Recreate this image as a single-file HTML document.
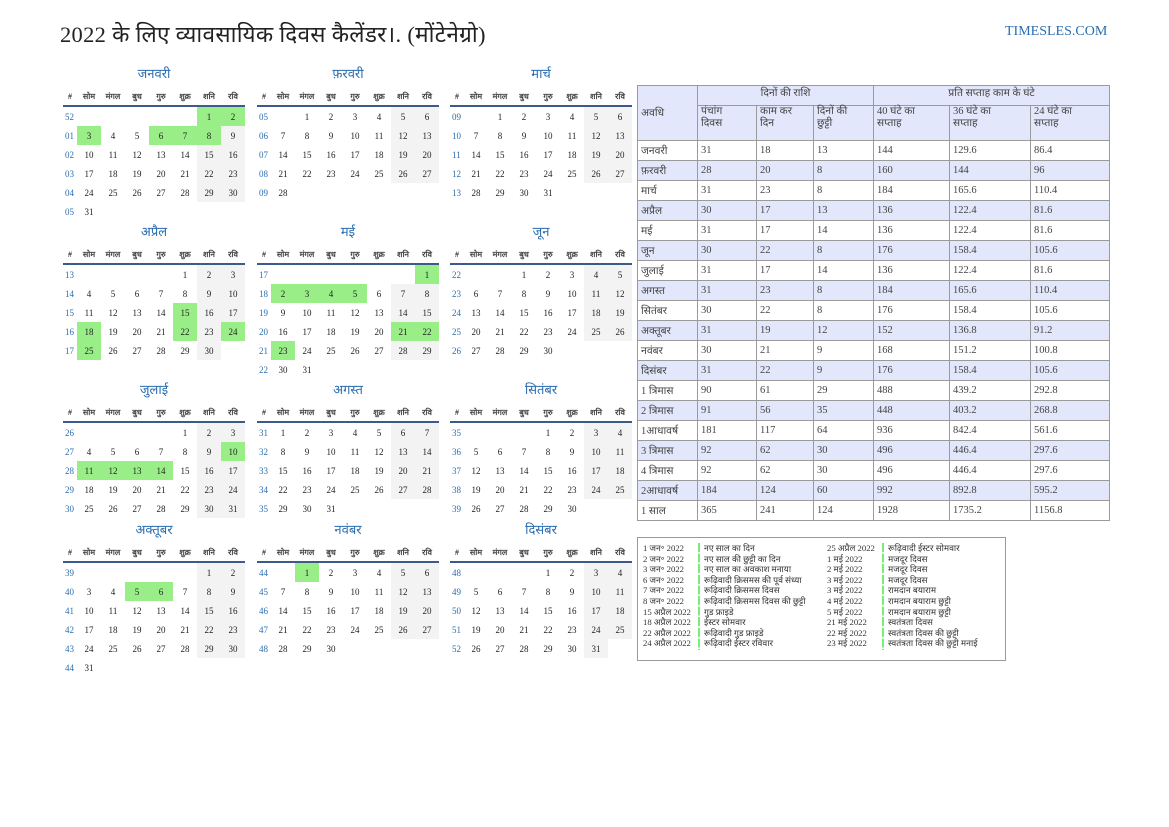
<!DOCTYPE html>
<html><head><meta charset="utf-8">
<style>
body{margin:0;width:1169px;height:827px;background:#fff;position:relative;font-family:"Liberation Serif",serif;color:#222;overflow:hidden}
.t{position:absolute;left:60px;top:18px;font-size:22.5px;color:#222;letter-spacing:0.3px}
.logo{position:absolute;left:1005px;top:24px;font-size:14px;color:#2a6db0}
.m{position:absolute;width:182px}
.m h3{margin:0;height:22px;line-height:18px;text-align:center;font-weight:normal;font-size:13px;color:#2a6db0}
.m table{border-collapse:collapse;width:182px;table-layout:fixed;font-size:9px}
.m td{height:19px;padding:0;text-align:center;}
.m td:first-child{width:14px;color:#2a6db0;text-align:left;padding-left:2px}
.m tr.h td{height:18px;font-size:8px;font-weight:bold;color:#444;border-bottom:2px solid #3c5a8a}
.m tr.h td:first-child{color:#333;text-align:center;padding:0}
.w{background:#f3f3f3}
.g{background:#99ee88}
.s{position:absolute;left:637px;top:85px;border-collapse:collapse;font-size:10.5px;color:#444;table-layout:fixed}
.s td{border:1px solid #9a9a9a;padding:0 3px;height:19px;text-align:left}
.s tr.b td{background:#e2e7fb}
.s .hd td{background:#e2e7fb;vertical-align:top}
.hol{position:absolute;left:637px;top:537px;width:369px;height:124px;border:1px solid #9a9a9a;box-sizing:border-box;font-size:8.7px;color:#333;line-height:10.6px;padding:4px 0 0 5px}
.c{position:absolute;top:5px;white-space:nowrap}
.bar{position:absolute;top:5px;width:2px;height:107px;background:repeating-linear-gradient(#7e7 0 9px,#fff 9px 10.6px)}
</style></head><body>
<div class="t">2022 के लिए व्यावसायिक दिवस कैलेंडर।. (मोंटेनेग्रो)</div>
<div class="logo">TIMESLES.COM</div>

<div class="m" style="left:63px;top:65px"><h3>जनवरी</h3><table>
<tr class="h"><td>#</td><td>सोम</td><td>मंगल</td><td>बुध</td><td>गुरु</td><td>शुक्र</td><td>शनि</td><td>रवि</td></tr>
<tr><td>52</td><td></td><td></td><td></td><td></td><td></td><td class="g">1</td><td class="g">2</td></tr>
<tr><td>01</td><td class="g">3</td><td>4</td><td>5</td><td class="g">6</td><td class="g">7</td><td class="g">8</td><td class="w">9</td></tr>
<tr><td>02</td><td>10</td><td>11</td><td>12</td><td>13</td><td>14</td><td class="w">15</td><td class="w">16</td></tr>
<tr><td>03</td><td>17</td><td>18</td><td>19</td><td>20</td><td>21</td><td class="w">22</td><td class="w">23</td></tr>
<tr><td>04</td><td>24</td><td>25</td><td>26</td><td>27</td><td>28</td><td class="w">29</td><td class="w">30</td></tr>
<tr><td>05</td><td>31</td><td></td><td></td><td></td><td></td><td></td><td></td></tr></table></div>

<div class="m" style="left:257px;top:65px"><h3>फ़रवरी</h3><table>
<tr class="h"><td>#</td><td>सोम</td><td>मंगल</td><td>बुध</td><td>गुरु</td><td>शुक्र</td><td>शनि</td><td>रवि</td></tr>
<tr><td>05</td><td></td><td>1</td><td>2</td><td>3</td><td>4</td><td class="w">5</td><td class="w">6</td></tr>
<tr><td>06</td><td>7</td><td>8</td><td>9</td><td>10</td><td>11</td><td class="w">12</td><td class="w">13</td></tr>
<tr><td>07</td><td>14</td><td>15</td><td>16</td><td>17</td><td>18</td><td class="w">19</td><td class="w">20</td></tr>
<tr><td>08</td><td>21</td><td>22</td><td>23</td><td>24</td><td>25</td><td class="w">26</td><td class="w">27</td></tr>
<tr><td>09</td><td>28</td><td></td><td></td><td></td><td></td><td></td><td></td></tr></table></div>

<div class="m" style="left:450px;top:65px"><h3>मार्च</h3><table>
<tr class="h"><td>#</td><td>सोम</td><td>मंगल</td><td>बुध</td><td>गुरु</td><td>शुक्र</td><td>शनि</td><td>रवि</td></tr>
<tr><td>09</td><td></td><td>1</td><td>2</td><td>3</td><td>4</td><td class="w">5</td><td class="w">6</td></tr>
<tr><td>10</td><td>7</td><td>8</td><td>9</td><td>10</td><td>11</td><td class="w">12</td><td class="w">13</td></tr>
<tr><td>11</td><td>14</td><td>15</td><td>16</td><td>17</td><td>18</td><td class="w">19</td><td class="w">20</td></tr>
<tr><td>12</td><td>21</td><td>22</td><td>23</td><td>24</td><td>25</td><td class="w">26</td><td class="w">27</td></tr>
<tr><td>13</td><td>28</td><td>29</td><td>30</td><td>31</td><td></td><td></td><td></td></tr></table></div>

<div class="m" style="left:63px;top:223px"><h3>अप्रैल</h3><table>
<tr class="h"><td>#</td><td>सोम</td><td>मंगल</td><td>बुध</td><td>गुरु</td><td>शुक्र</td><td>शनि</td><td>रवि</td></tr>
<tr><td>13</td><td></td><td></td><td></td><td></td><td>1</td><td class="w">2</td><td class="w">3</td></tr>
<tr><td>14</td><td>4</td><td>5</td><td>6</td><td>7</td><td>8</td><td class="w">9</td><td class="w">10</td></tr>
<tr><td>15</td><td>11</td><td>12</td><td>13</td><td>14</td><td class="g">15</td><td class="w">16</td><td class="w">17</td></tr>
<tr><td>16</td><td class="g">18</td><td>19</td><td>20</td><td>21</td><td class="g">22</td><td class="w">23</td><td class="g">24</td></tr>
<tr><td>17</td><td class="g">25</td><td>26</td><td>27</td><td>28</td><td>29</td><td class="w">30</td><td></td></tr></table></div>

<div class="m" style="left:257px;top:223px"><h3>मई</h3><table>
<tr class="h"><td>#</td><td>सोम</td><td>मंगल</td><td>बुध</td><td>गुरु</td><td>शुक्र</td><td>शनि</td><td>रवि</td></tr>
<tr><td>17</td><td></td><td></td><td></td><td></td><td></td><td></td><td class="g">1</td></tr>
<tr><td>18</td><td class="g">2</td><td class="g">3</td><td class="g">4</td><td class="g">5</td><td>6</td><td class="w">7</td><td class="w">8</td></tr>
<tr><td>19</td><td>9</td><td>10</td><td>11</td><td>12</td><td>13</td><td class="w">14</td><td class="w">15</td></tr>
<tr><td>20</td><td>16</td><td>17</td><td>18</td><td>19</td><td>20</td><td class="g">21</td><td class="g">22</td></tr>
<tr><td>21</td><td class="g">23</td><td>24</td><td>25</td><td>26</td><td>27</td><td class="w">28</td><td class="w">29</td></tr>
<tr><td>22</td><td>30</td><td>31</td><td></td><td></td><td></td><td></td><td></td></tr></table></div>

<div class="m" style="left:450px;top:223px"><h3>जून</h3><table>
<tr class="h"><td>#</td><td>सोम</td><td>मंगल</td><td>बुध</td><td>गुरु</td><td>शुक्र</td><td>शनि</td><td>रवि</td></tr>
<tr><td>22</td><td></td><td></td><td>1</td><td>2</td><td>3</td><td class="w">4</td><td class="w">5</td></tr>
<tr><td>23</td><td>6</td><td>7</td><td>8</td><td>9</td><td>10</td><td class="w">11</td><td class="w">12</td></tr>
<tr><td>24</td><td>13</td><td>14</td><td>15</td><td>16</td><td>17</td><td class="w">18</td><td class="w">19</td></tr>
<tr><td>25</td><td>20</td><td>21</td><td>22</td><td>23</td><td>24</td><td class="w">25</td><td class="w">26</td></tr>
<tr><td>26</td><td>27</td><td>28</td><td>29</td><td>30</td><td></td><td></td><td></td></tr></table></div>

<div class="m" style="left:63px;top:381px"><h3>जुलाई</h3><table>
<tr class="h"><td>#</td><td>सोम</td><td>मंगल</td><td>बुध</td><td>गुरु</td><td>शुक्र</td><td>शनि</td><td>रवि</td></tr>
<tr><td>26</td><td></td><td></td><td></td><td></td><td>1</td><td class="w">2</td><td class="w">3</td></tr>
<tr><td>27</td><td>4</td><td>5</td><td>6</td><td>7</td><td>8</td><td class="w">9</td><td class="g">10</td></tr>
<tr><td>28</td><td class="g">11</td><td class="g">12</td><td class="g">13</td><td class="g">14</td><td>15</td><td class="w">16</td><td class="w">17</td></tr>
<tr><td>29</td><td>18</td><td>19</td><td>20</td><td>21</td><td>22</td><td class="w">23</td><td class="w">24</td></tr>
<tr><td>30</td><td>25</td><td>26</td><td>27</td><td>28</td><td>29</td><td class="w">30</td><td class="w">31</td></tr></table></div>

<div class="m" style="left:257px;top:381px"><h3>अगस्त</h3><table>
<tr class="h"><td>#</td><td>सोम</td><td>मंगल</td><td>बुध</td><td>गुरु</td><td>शुक्र</td><td>शनि</td><td>रवि</td></tr>
<tr><td>31</td><td>1</td><td>2</td><td>3</td><td>4</td><td>5</td><td class="w">6</td><td class="w">7</td></tr>
<tr><td>32</td><td>8</td><td>9</td><td>10</td><td>11</td><td>12</td><td class="w">13</td><td class="w">14</td></tr>
<tr><td>33</td><td>15</td><td>16</td><td>17</td><td>18</td><td>19</td><td class="w">20</td><td class="w">21</td></tr>
<tr><td>34</td><td>22</td><td>23</td><td>24</td><td>25</td><td>26</td><td class="w">27</td><td class="w">28</td></tr>
<tr><td>35</td><td>29</td><td>30</td><td>31</td><td></td><td></td><td></td><td></td></tr></table></div>

<div class="m" style="left:450px;top:381px"><h3>सितंबर</h3><table>
<tr class="h"><td>#</td><td>सोम</td><td>मंगल</td><td>बुध</td><td>गुरु</td><td>शुक्र</td><td>शनि</td><td>रवि</td></tr>
<tr><td>35</td><td></td><td></td><td></td><td>1</td><td>2</td><td class="w">3</td><td class="w">4</td></tr>
<tr><td>36</td><td>5</td><td>6</td><td>7</td><td>8</td><td>9</td><td class="w">10</td><td class="w">11</td></tr>
<tr><td>37</td><td>12</td><td>13</td><td>14</td><td>15</td><td>16</td><td class="w">17</td><td class="w">18</td></tr>
<tr><td>38</td><td>19</td><td>20</td><td>21</td><td>22</td><td>23</td><td class="w">24</td><td class="w">25</td></tr>
<tr><td>39</td><td>26</td><td>27</td><td>28</td><td>29</td><td>30</td><td></td><td></td></tr></table></div>

<div class="m" style="left:63px;top:521px"><h3>अक्तूबर</h3><table>
<tr class="h"><td>#</td><td>सोम</td><td>मंगल</td><td>बुध</td><td>गुरु</td><td>शुक्र</td><td>शनि</td><td>रवि</td></tr>
<tr><td>39</td><td></td><td></td><td></td><td></td><td></td><td class="w">1</td><td class="w">2</td></tr>
<tr><td>40</td><td>3</td><td>4</td><td class="g">5</td><td class="g">6</td><td>7</td><td class="w">8</td><td class="w">9</td></tr>
<tr><td>41</td><td>10</td><td>11</td><td>12</td><td>13</td><td>14</td><td class="w">15</td><td class="w">16</td></tr>
<tr><td>42</td><td>17</td><td>18</td><td>19</td><td>20</td><td>21</td><td class="w">22</td><td class="w">23</td></tr>
<tr><td>43</td><td>24</td><td>25</td><td>26</td><td>27</td><td>28</td><td class="w">29</td><td class="w">30</td></tr>
<tr><td>44</td><td>31</td><td></td><td></td><td></td><td></td><td></td><td></td></tr></table></div>

<div class="m" style="left:257px;top:521px"><h3>नवंबर</h3><table>
<tr class="h"><td>#</td><td>सोम</td><td>मंगल</td><td>बुध</td><td>गुरु</td><td>शुक्र</td><td>शनि</td><td>रवि</td></tr>
<tr><td>44</td><td></td><td class="g">1</td><td>2</td><td>3</td><td>4</td><td class="w">5</td><td class="w">6</td></tr>
<tr><td>45</td><td>7</td><td>8</td><td>9</td><td>10</td><td>11</td><td class="w">12</td><td class="w">13</td></tr>
<tr><td>46</td><td>14</td><td>15</td><td>16</td><td>17</td><td>18</td><td class="w">19</td><td class="w">20</td></tr>
<tr><td>47</td><td>21</td><td>22</td><td>23</td><td>24</td><td>25</td><td class="w">26</td><td class="w">27</td></tr>
<tr><td>48</td><td>28</td><td>29</td><td>30</td><td></td><td></td><td></td><td></td></tr></table></div>

<div class="m" style="left:450px;top:521px"><h3>दिसंबर</h3><table>
<tr class="h"><td>#</td><td>सोम</td><td>मंगल</td><td>बुध</td><td>गुरु</td><td>शुक्र</td><td>शनि</td><td>रवि</td></tr>
<tr><td>48</td><td></td><td></td><td></td><td>1</td><td>2</td><td class="w">3</td><td class="w">4</td></tr>
<tr><td>49</td><td>5</td><td>6</td><td>7</td><td>8</td><td>9</td><td class="w">10</td><td class="w">11</td></tr>
<tr><td>50</td><td>12</td><td>13</td><td>14</td><td>15</td><td>16</td><td class="w">17</td><td class="w">18</td></tr>
<tr><td>51</td><td>19</td><td>20</td><td>21</td><td>22</td><td>23</td><td class="w">24</td><td class="w">25</td></tr>
<tr><td>52</td><td>26</td><td>27</td><td>28</td><td>29</td><td>30</td><td class="w">31</td><td></td></tr></table></div>

<table class="s">
<colgroup><col style="width:60px"><col style="width:59px"><col style="width:57px"><col style="width:60px"><col style="width:76px"><col style="width:81px"><col style="width:79px"></colgroup>
<tr class="hd"><td rowspan="2" style="vertical-align:middle">अवधि</td><td colspan="3" style="text-align:center;height:19px">दिनों की राशि</td><td colspan="3" style="text-align:center">प्रति सप्ताह काम के घंटे</td></tr>
<tr class="hd"><td style="height:34px;line-height:12px">पंचांग<br>दिवस</td><td style="line-height:12px">काम कर<br>दिन</td><td style="line-height:12px">दिनों की<br>छुट्टी</td><td style="line-height:12px">40 घंटे का<br>सप्ताह</td><td style="line-height:12px">36 घंटे का<br>सप्ताह</td><td style="line-height:12px">24 घंटे का<br>सप्ताह</td></tr>
<tr><td>जनवरी</td><td>31</td><td>18</td><td>13</td><td>144</td><td>129.6</td><td>86.4</td></tr>
<tr class="b"><td>फ़रवरी</td><td>28</td><td>20</td><td>8</td><td>160</td><td>144</td><td>96</td></tr>
<tr><td>मार्च</td><td>31</td><td>23</td><td>8</td><td>184</td><td>165.6</td><td>110.4</td></tr>
<tr class="b"><td>अप्रैल</td><td>30</td><td>17</td><td>13</td><td>136</td><td>122.4</td><td>81.6</td></tr>
<tr><td>मई</td><td>31</td><td>17</td><td>14</td><td>136</td><td>122.4</td><td>81.6</td></tr>
<tr class="b"><td>जून</td><td>30</td><td>22</td><td>8</td><td>176</td><td>158.4</td><td>105.6</td></tr>
<tr><td>जुलाई</td><td>31</td><td>17</td><td>14</td><td>136</td><td>122.4</td><td>81.6</td></tr>
<tr class="b"><td>अगस्त</td><td>31</td><td>23</td><td>8</td><td>184</td><td>165.6</td><td>110.4</td></tr>
<tr><td>सितंबर</td><td>30</td><td>22</td><td>8</td><td>176</td><td>158.4</td><td>105.6</td></tr>
<tr class="b"><td>अक्तूबर</td><td>31</td><td>19</td><td>12</td><td>152</td><td>136.8</td><td>91.2</td></tr>
<tr><td>नवंबर</td><td>30</td><td>21</td><td>9</td><td>168</td><td>151.2</td><td>100.8</td></tr>
<tr class="b"><td>दिसंबर</td><td>31</td><td>22</td><td>9</td><td>176</td><td>158.4</td><td>105.6</td></tr>
<tr><td>1 त्रिमास</td><td>90</td><td>61</td><td>29</td><td>488</td><td>439.2</td><td>292.8</td></tr>
<tr class="b"><td>2 त्रिमास</td><td>91</td><td>56</td><td>35</td><td>448</td><td>403.2</td><td>268.8</td></tr>
<tr><td>1आधावर्ष</td><td>181</td><td>117</td><td>64</td><td>936</td><td>842.4</td><td>561.6</td></tr>
<tr class="b"><td>3 त्रिमास</td><td>92</td><td>62</td><td>30</td><td>496</td><td>446.4</td><td>297.6</td></tr>
<tr><td>4 त्रिमास</td><td>92</td><td>62</td><td>30</td><td>496</td><td>446.4</td><td>297.6</td></tr>
<tr class="b"><td>2आधावर्ष</td><td>184</td><td>124</td><td>60</td><td>992</td><td>892.8</td><td>595.2</td></tr>
<tr><td>1 साल</td><td>365</td><td>241</td><td>124</td><td>1928</td><td>1735.2</td><td>1156.8</td></tr>
</table>

<div class="hol">
<div class="c" style="left:5px">1 जन॰ 2022<br>2 जन॰ 2022<br>3 जन॰ 2022<br>6 जन॰ 2022<br>7 जन॰ 2022<br>8 जन॰ 2022<br>15 अप्रैल 2022<br>18 अप्रैल 2022<br>22 अप्रैल 2022<br>24 अप्रैल 2022</div>
<div class="bar" style="left:60px"></div>
<div class="c" style="left:66px">नए साल का दिन<br>नए साल की छुट्टी का दिन<br>नए साल का अवकाश मनाया<br>रूढ़िवादी क्रिसमस की पूर्व संध्या<br>रूढ़िवादी क्रिसमस दिवस<br>रूढ़िवादी क्रिसमस दिवस की छुट्टी<br>गुड फ्राइडे<br>ईस्टर सोमवार<br>रूढ़िवादी गुड फ्राइडे<br>रूढ़िवादी ईस्टर रविवार</div>
<div class="c" style="left:189px">25 अप्रैल 2022<br>1 मई 2022<br>2 मई 2022<br>3 मई 2022<br>3 मई 2022<br>4 मई 2022<br>5 मई 2022<br>21 मई 2022<br>22 मई 2022<br>23 मई 2022</div>
<div class="bar" style="left:244px"></div>
<div class="c" style="left:250px">रूढ़िवादी ईस्टर सोमवार<br>मजदूर दिवस<br>मजदूर दिवस<br>मजदूर दिवस<br>रामदान बयाराम<br>रामदान बयाराम छुट्टी<br>रामदान बयाराम छुट्टी<br>स्वतंत्रता दिवस<br>स्वतंत्रता दिवस की छुट्टी<br>स्वतंत्रता दिवस की छुट्टी मनाई</div>
</div>
</body></html>
